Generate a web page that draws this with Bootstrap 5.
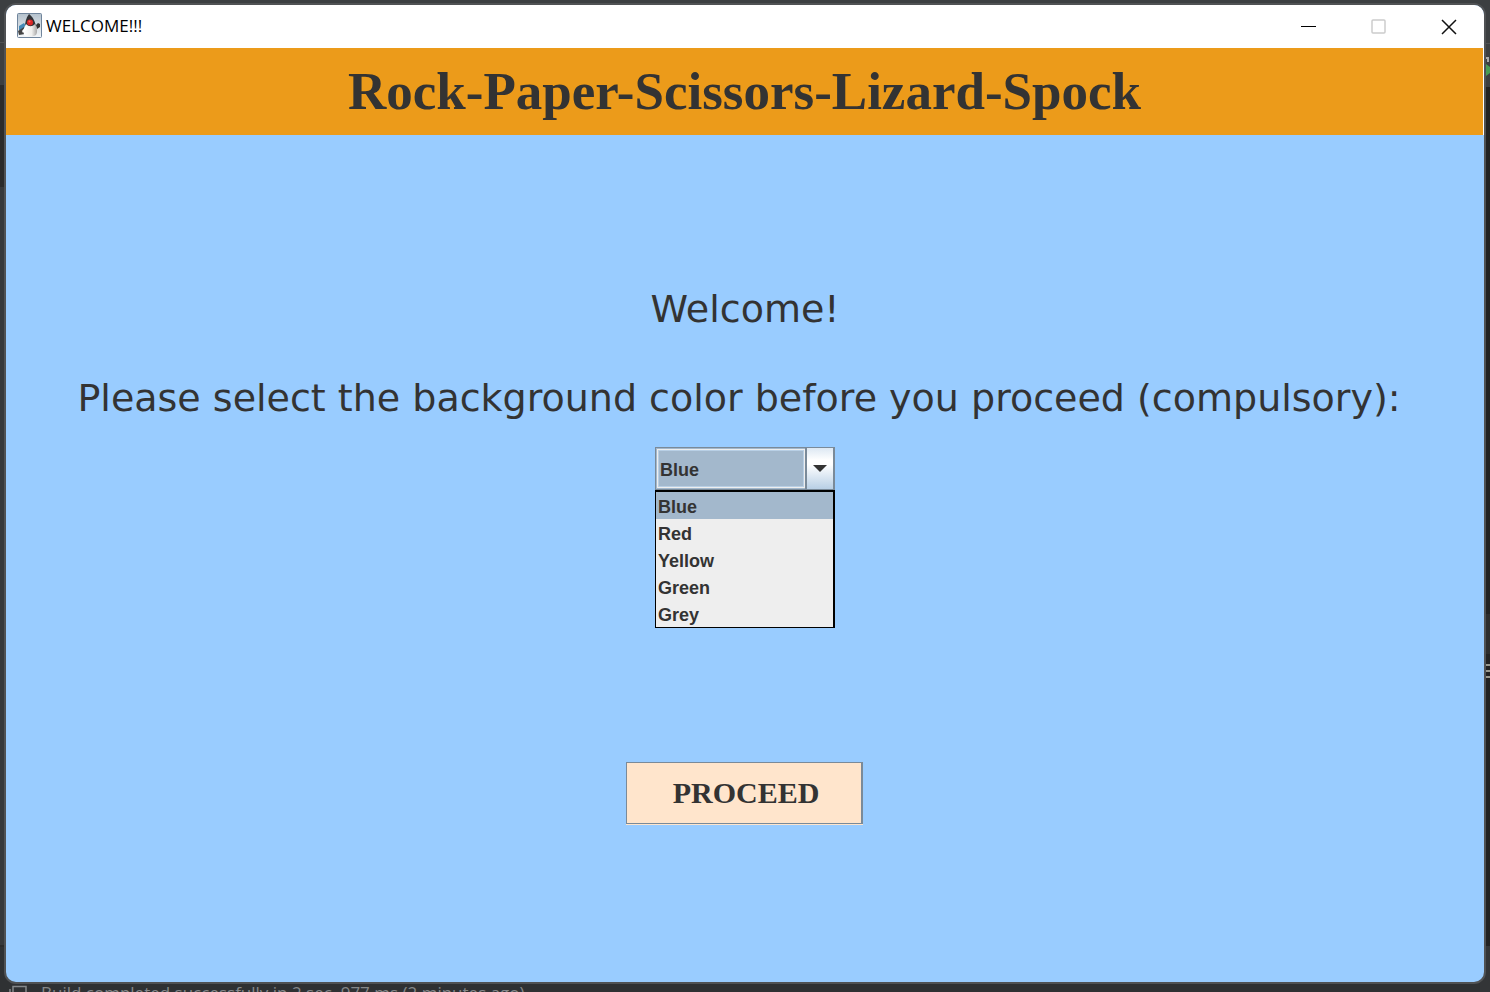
<!DOCTYPE html>
<html lang="en">
<head>
<meta charset="utf-8">
<meta name="viewport" content="width=device-width, initial-scale=1">
<title>WELCOME!!!</title>
<link href="https://cdn.jsdelivr.net/npm/bootstrap@5.3.0/dist/css/bootstrap.min.css" rel="stylesheet">
<style>
  body {
    background:
      linear-gradient(#3c3f41 0 42px, #505254 42px 43px, #3c3f41 43px 86px, #222 86px 613px, #2d2d2d 613px 653px, #222 653px 945px, #333537 945px) right / 10px 992px no-repeat,
      linear-gradient(#3c3f41 0 42px, #505254 42px 43px, #3c3f41 43px 85px, #2b2b2b 85px 187px, #37393b 187px 945px, #2b2b2b 945px 947px, #2f3133 947px);
    color: #333;
    overflow: hidden;
  }
  .desktop { padding: 3px 4px 0; }
  .behind { top: 0; right: 0; }
  .app-window { border: 2px solid #505254; border-radius: 12px; background: #9cf; }
  .title-bar { height: 43px; background: #fff; padding: 0 10px 2px 11px; }
  .title-text { font: 17px/24px "Open Sans", "Noto Sans", sans-serif; color: #000; }
  .win-buttons { gap: 20px; }
  .win-btn { width: 50px; height: 40px; border: 0; padding: 0; background: none; }
  .banner { background: #ec9b1a; margin-right: 1px; height: 87px; padding-bottom: 2px; box-shadow: 1px 0 #fff; }
  .banner h1 { font: bold 53px/60px "Liberation Serif", serif; }
  .prompt { font: 38px/44px "DejaVu Sans", sans-serif; }
  label.prompt { padding-right: 12px; }
  .greeting { margin-top: 152px; margin-bottom: 45px; }
  .combo { width: 180px; margin-top: 27px; font: bold 18px/24px "Liberation Sans", sans-serif; }
  .combo-box { height: 43px; border: 1px solid #7a8a99; border-right-width: 2px; background: #a3b8cc; }
  .combo-box select {
    appearance: none; border: 1px solid #eee; margin: 1px 0 1px 1px; outline: 1px solid #b8cfe5; outline-offset: -2px;
    padding: 3px 2px 0; border-radius: 0; background: #a3b8cc; color: #333; font: inherit; min-width: 0;
  }
  .combo-arrow { width: 28px; border: 0; border-left: 2px solid #7a8a99; padding: 0; background: linear-gradient(#dde8f3, #fff 30%, #fff 40%, #b8cfe5); }
  .combo .dropdown-menu {
    top: 100%; left: 0; width: 100%; min-width: 0; margin: 0; padding: 0; border: solid #000; border-width: 2px 2px 1px 1px;
    border-radius: 0; background: #eee; font: inherit;
  }
  .combo .dropdown-item { padding: 3px 2px 0; color: #333; font: inherit; }
  .combo .dropdown-item:hover, .combo .dropdown-item.active { background: #a3b8cc; }
  .proceed {
    width: 237px; height: 62px; margin: 272px 1px 158px 0; padding: 0 0 0 4px; border: 1px solid #7a8a99; border-right-width: 2px;
    background: #ffe5cc; color: #333; box-shadow: 0 1px #ffe5cc; font: bold 30px/34px "Liberation Serif", serif;
  }
  .status { font: 17px/18px "Open Sans", sans-serif; color: #85888a; height: 9px; padding-left: 5px; gap: 12px; }
</style>
</head>
<body>
<svg class="behind position-absolute" width="10" height="700" aria-hidden="true">
  <path d="M5 58h3v4M5 68v5" fill="none" stroke="#aaa" stroke-width="2"/>
  <path d="M6 64l4 3v6l-4 3z" fill="#499c54"/>
  <path d="M10 665H5v12h5M5 671h5" fill="none" stroke="#9a9a90" stroke-width="2"/>
</svg>
<div class="desktop position-relative">
  <main class="app-window overflow-hidden">
    <div class="title-bar d-flex align-items-center">
      <svg width="25" height="25" viewBox="0 0 25 25" aria-hidden="true">
        <defs>
          <linearGradient id="tile" x2="0" y2="1"><stop stop-color="#b4c1cc"/><stop offset="1" stop-color="#f4f7f9"/></linearGradient>
          <linearGradient id="belly"><stop stop-color="#fff"/><stop offset=".6" stop-color="#f0f0ee"/><stop offset="1" stop-color="#a5a5a5"/></linearGradient>
        </defs>
        <rect x=".5" y=".5" width="24" height="24" rx="1" fill="url(#tile)" stroke="#70859c"/>
        <path d="M2 13l5-3 2 3-2 4H2z" fill="#4588b5"/>
        <path d="M1 18l6-4 3 3-2 4-6 1z" fill="#444"/>
        <path d="M19 12l2-2 2 1v3l-3 2z" fill="#333"/>
        <path d="M12 1c4 3 6 7 7 13H8c0-5 1-9 4-13z" fill="#303235"/>
        <path d="M9 11c3 3 6 3 9 0 2 4 3 8 1 11-4 2-9 2-12 0-1-4 0-8 2-11z" fill="url(#belly)"/>
        <path d="M9 13l-4 5 1 2 4-4z" fill="#fff"/>
        <circle cx="13" cy="9.500" r="3" fill="#d92727"/><circle cx="12.500" cy="8.500" r="1" fill="#f66"/>
      </svg>
      <span class="title-text ms-1">WELCOME!!!</span>
      <div class="win-buttons ms-auto d-flex">
        <button class="win-btn" aria-label="Minimize"><svg width="16" height="16"><path d="M0 7.500h15" stroke="#000"/></svg></button>
        <button class="win-btn" aria-label="Maximize" disabled><svg width="16" height="16"><rect x="1" y="1" width="13" height="13" rx="1" fill="none" stroke="#ccc" stroke-width="1.500"/></svg></button>
        <button class="win-btn" aria-label="Close"><svg width="16" height="16"><path d="M1 1l14 14M15 1L1 15" stroke="#111" stroke-width="1.500"/></svg></button>
      </div>
    </div>
    <header class="banner d-flex align-items-center justify-content-center"><h1 class="m-0">Rock-Paper-Scissors-Lizard-Spock</h1></header>
    <form class="d-flex flex-column align-items-center text-center" onsubmit="return false">
      <p class="prompt greeting">Welcome!</p>
      <label class="prompt" for="color">Please select the background color before you proceed (compulsory):</label>
      <div class="combo position-relative text-start">
        <div class="combo-box d-flex">
          <select id="color" class="flex-grow-1"><option>Blue</option><option>Red</option><option>Yellow</option><option>Green</option><option>Grey</option></select>
          <button type="button" class="combo-arrow" aria-label="Show colors"><svg class="d-block mx-auto" width="14" height="8"><path d="M0 0h14L7 7z" fill="#333"/></svg></button>
        </div>
        <ul class="dropdown-menu show">
          <li><button type="button" class="dropdown-item active">Blue</button></li>
          <li><button type="button" class="dropdown-item">Red</button></li>
          <li><button type="button" class="dropdown-item">Yellow</button></li>
          <li><button type="button" class="dropdown-item">Green</button></li>
          <li><button type="button" class="dropdown-item">Grey</button></li>
        </ul>
      </div>
      <button type="submit" class="proceed">PROCEED</button>
    </form>
  </main>
  <div class="status d-flex overflow-hidden">
    <svg width="20" height="16" aria-hidden="true"><path d="M1 5v11M4 16V2.500h13V16" fill="none" stroke="#85888a" stroke-width="1.500"/></svg>
    <span>Build completed successfully in 2 sec, 977 ms (2 minutes ago)</span>
  </div>
</div>
<script src="https://cdn.jsdelivr.net/npm/bootstrap@5.3.0/dist/js/bootstrap.bundle.min.js"></script>
</body>
</html>
